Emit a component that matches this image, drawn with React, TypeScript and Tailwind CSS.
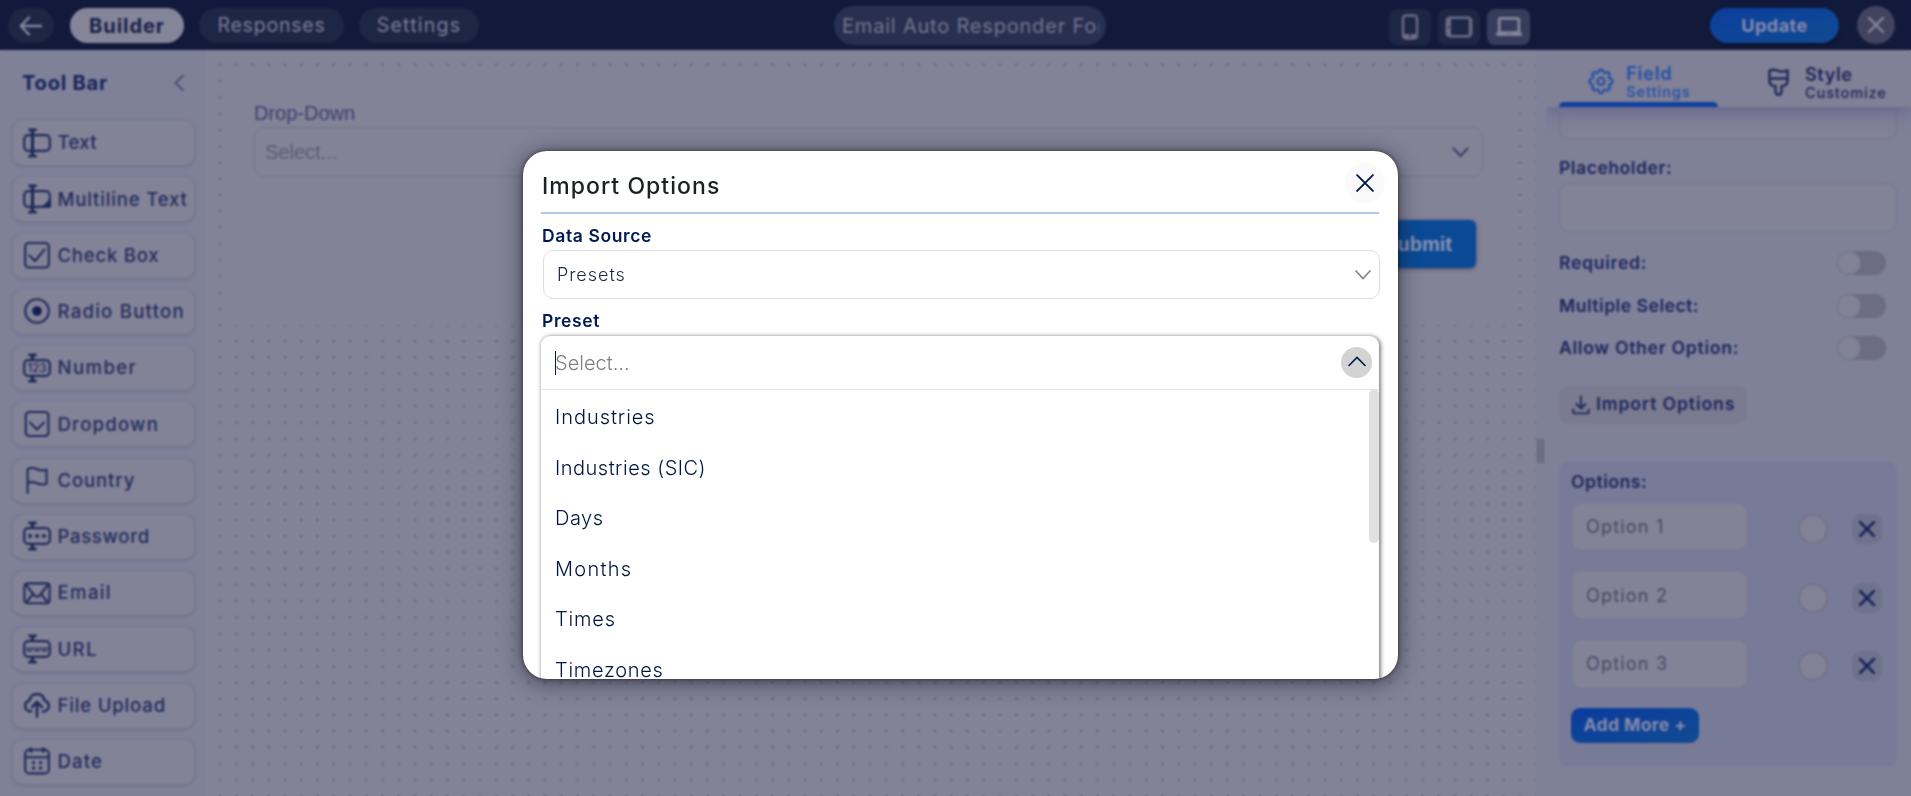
import type { ReactNode } from "react";

const NAVY = "#1f2a58";

function FieldIcon({ children, bar = "split" }: { children?: ReactNode; bar?: "split" | "full" }) {
  return (
    <svg width="28" height="30" viewBox="0 0 28 30" fill="none" stroke={NAVY} strokeWidth="2.2">
      <rect x="1.2" y="7.2" width="25.6" height="15.6" rx="4" />
      {bar === "full" ? (
        <path d="M9.5 2V28" strokeWidth="3.2" />
      ) : (
        <path d="M9.5 2V7M9.5 23V28" strokeWidth="3.2" />
      )}
      <path d="M6.4 1.8h6.2M6.4 28.200h6.2" strokeWidth="2.8" strokeLinecap="round" />
      {children}
    </svg>
  );
}

function BoxIcon({ children }: { children: ReactNode }) {
  return (
    <svg width="28" height="30" viewBox="0 0 28 30" fill="none" stroke={NAVY} strokeWidth="2.1" strokeLinecap="round" strokeLinejoin="round">
      {children}
    </svg>
  );
}

const tools: { label: string; track: string; icon: ReactNode }[] = [
  { label: "Text", track: "tracking-[0.3px]", icon: <FieldIcon bar="full" /> },
  {
    label: "Multiline Text",
    track: "tracking-[0.85px]",
    icon: (
      <FieldIcon bar="full">
        <path d="M28 14v9.800h-10z" fill={NAVY} stroke="none" />
      </FieldIcon>
    ),
  },
  {
    label: "Check Box",
    track: "tracking-[0.8px]",
    icon: (
      <BoxIcon>
        <rect x="2.200" y="3" width="23.600" height="24.500" rx="3.500" />
        <path d="M6.500 15.500l5.500 5.500 9.500-11.500" />
      </BoxIcon>
    ),
  },
  {
    label: "Radio Button",
    track: "tracking-[1.28px]",
    icon: (
      <BoxIcon>
        <circle cx="14" cy="15" r="11.800" />
        <circle cx="14" cy="15" r="4.800" fill="#131d52" stroke="none" />
      </BoxIcon>
    ),
  },
  {
    label: "Number",
    track: "tracking-[1.45px]",
    icon: (
      <FieldIcon>
        <text x="14" y="19.300" textAnchor="middle" fontSize="11.500" fontWeight="500" fill={NAVY} stroke="none" className="font-['Inter',sans-serif]">
          123
        </text>
      </FieldIcon>
    ),
  },
  {
    label: "Dropdown",
    track: "tracking-[1.25px]",
    icon: (
      <BoxIcon>
        <rect x="2.800" y="3" width="22.600" height="24" rx="3.500" />
        <path d="M7 13.500l7 7 7-7" />
      </BoxIcon>
    ),
  },
  {
    label: "Country",
    track: "tracking-[0.9px]",
    icon: (
      <BoxIcon>
        <path d="M4.600 28V4.200c3-2 6-1.500 9.400 0s6.500 1.800 9.600.3v14c-3.100 1.500-6.200 1.200-9.600-.2s-6.400-1.800-9.400-.2" />
      </BoxIcon>
    ),
  },
  {
    label: "Password",
    track: "tracking-[0.7px]",
    icon: (
      <FieldIcon>
        <path d="M5.300 15h3.600M12.200 15h3.600M19.100 15h3.600" strokeWidth="3.600" />
      </FieldIcon>
    ),
  },
  {
    label: "Email",
    track: "tracking-[1.4px]",
    icon: (
      <BoxIcon>
        <rect x="1.400" y="5.400" width="25.200" height="19.800" rx="3" />
        <path d="M3 7l8.500 10.500c1.500 1.700 3.500 1.700 5 0L25 7M3.500 24l6.500-8M24.500 24L18 16" />
      </BoxIcon>
    ),
  },
  {
    label: "URL",
    track: "tracking-[1.4px]",
    icon: (
      <FieldIcon>
        <text x="14" y="17.800" textAnchor="middle" fontSize="9" fontWeight="600" fill={NAVY} stroke="none" className="font-['Inter',sans-serif]">
          www
        </text>
      </FieldIcon>
    ),
  },
  {
    label: "File Upload",
    track: "tracking-[0.85px]",
    icon: (
      <BoxIcon>
        <g strokeWidth="2.500">
          <path d="M8.200 21.500C4.500 21.500 2.200 19 2.200 16c0-2.800 1.700-4.800 4.300-5.500C7.300 6.500 10.300 4 14 4s6.700 2.500 7.500 6.500c2.600.7 4.300 2.700 4.300 5.500 0 3-2.300 5.500-6 5.500" />
          <path d="M14 26.500V12.500M9 17l5-5 5 5" />
        </g>
      </BoxIcon>
    ),
  },
  {
    label: "Date",
    track: "tracking-[1.15px]",
    icon: (
      <BoxIcon>
        <rect x="2.200" y="3.800" width="23.600" height="23.600" rx="4" />
        <path d="M2.200 11.200h23.600" />
        <path d="M7.800 2.600v3M20.200 2.600v3" strokeWidth="2.600" />
        <path d="M10.500 16.600h.1M17.500 16.600h.1M10.500 22h.1M17.500 22h.1" strokeWidth="3.400" />
      </BoxIcon>
    ),
  },
];

const toggles = [
  { label: "Required:", track: "tracking-[0.76px]" },
  { label: "Multiple Select:", track: "tracking-[0.54px]" },
  { label: "Allow Other Option:", track: "tracking-[0.76px]" },
];

const presets = [
  { label: "Industries", track: "tracking-[0.95px]" },
  { label: "Industries (SIC)", track: "tracking-[0.5px]" },
  { label: "Days", track: "tracking-[0.5px]" },
  { label: "Months", track: "tracking-[1.3px]" },
  { label: "Times", track: "tracking-[0.8px]" },
  { label: "Timezones", track: "tracking-[0.7px]" },
];

function Cross({ size, color, width }: { size: number; color: string; width: number }) {
  return (
    <svg width={size} height={size} viewBox="0 0 16 16" fill="none" stroke={color} strokeWidth={width} strokeLinecap="round">
      <path d="M1 1l14 14M15 1L1 15" />
    </svg>
  );
}

function Header() {
  return (
    <header className="flex h-[50px] shrink-0 items-start bg-[#121a3c] text-[19.5px] font-[430] text-[#7b7c97]">
      <div className="flex w-[834px] shrink-0 pl-2 pt-2">
        <button className="flex h-[35px] w-[46px] items-center justify-center rounded-full bg-[#1e2646]">
          <svg width="24" height="20" viewBox="0 0 24 20" fill="none" stroke="#85869c" strokeWidth="2.400" strokeLinecap="round" strokeLinejoin="round">
            <path d="M22 10H2M10 1.500L1.800 10l8.200 8.500" />
          </svg>
        </button>
        <button className="ml-4 flex h-[35px] w-[114px] items-center justify-center rounded-full bg-[#85859a] text-[20px] font-bold tracking-[0.95px] text-[#191f4a]">
          Builder
        </button>
        <button className="ml-[15px] flex h-[35px] w-[145px] items-center justify-center rounded-full bg-[#1e2646] tracking-[0.8px]">
          Responses
        </button>
        <button className="ml-[15px] flex h-[35px] w-[120px] items-center justify-center rounded-full bg-[#1e2646] tracking-[1.25px]">
          Settings
        </button>
      </div>
      <div className="mt-[6px] flex h-[39px] w-[272px] items-center rounded-full bg-[#292f50] pl-2 pr-[7px] text-[#73748d]">
        <span className="overflow-hidden whitespace-nowrap text-[20px] tracking-[0.8px]">Email Auto Responder Form</span>
      </div>
      <div className="flex flex-1 justify-end pr-4">
        <div className="mt-[9px] flex gap-[7px]">
          <div className="flex h-9 w-[42px] items-center justify-center rounded-lg bg-[#1e2646]">
            <svg width="18" height="26" viewBox="0 0 18 26" fill="none">
              <rect x="2" y="1.500" width="14" height="23" rx="3" stroke="#6b6c85" strokeWidth="2.400" />
              <path d="M2 20h14v2.500a2 2 0 0 1-2 2H4a2 2 0 0 1-2-2z" fill="#6b6c85" />
              <circle cx="9" cy="22" r="1" fill="#1e2646" />
            </svg>
          </div>
          <div className="flex h-9 w-[42px] items-center justify-center rounded-lg bg-[#1e2646]">
            <svg width="28" height="22" viewBox="0 0 28 22" fill="none">
              <rect x="1.800" y="1.800" width="24.400" height="18.400" rx="3" stroke="#6b6c85" strokeWidth="2.400" />
              <path d="M2 4a2 2 0 0 1 2-2h2v18H4a2 2 0 0 1-2-2z" fill="#6b6c85" />
              <path d="M24.500 2v18" stroke="#6b6c85" strokeWidth="1.500" />
              <circle cx="4" cy="11" r="1" fill="#1e2646" />
            </svg>
          </div>
          <div className="flex h-9 w-[43px] items-center justify-center rounded-lg bg-[#363c5c]">
            <svg width="28" height="20" viewBox="0 0 28 20" fill="none">
              <rect x="4.200" y="1.400" width="19.600" height="14.200" rx="1.500" stroke="#85869c" strokeWidth="2.800" />
              <path d="M1 15.500h26v1.500a2 2 0 0 1-2 2H3a2 2 0 0 1-2-2z" fill="#85869c" />
              <path d="M11 17.200h6" stroke="#5c6079" strokeWidth="1" />
            </svg>
          </div>
        </div>
        <button className="ml-[180px] mt-2 flex h-[35px] w-[129px] items-center justify-center rounded-full bg-linear-to-br from-[#0c3e9e] to-[#124a92] text-[18px] font-bold tracking-[0.5px] text-[#8689ab] shadow-[0_2px_4px_rgba(0,0,0,0.35)]">
          Update
        </button>
        <button className="ml-[18px] mt-[6px] flex size-[38px] items-center justify-center rounded-full bg-[#42435f]">
          <Cross size={16} color="#8b8ca2" width={2} />
        </button>
      </div>
    </header>
  );
}

function ToolBar() {
  return (
    <aside className="flex w-[206px] shrink-0 flex-col overflow-hidden bg-[#7f8199]">
      <div className="flex h-[66px] items-center justify-between pl-[22px] pr-[22px]">
        <h2 className="text-[20px] font-bold tracking-[0.8px] text-[#17225a]">Tool Bar</h2>
        <svg width="10" height="16" viewBox="0 0 10 16" fill="none" stroke="#4a4f72" strokeWidth="2" strokeLinecap="round">
          <path d="M8.800 1L1.500 8l7.300 7" />
        </svg>
      </div>
      <ul className="flex flex-col gap-[12.25px] pl-[13px] pr-3 pt-[5px]">
        {tools.map((t) => (
          <li key={t.label} className="flex h-11 shrink-0 items-center rounded-[10px] bg-[#838398] pb-px pl-[10px] shadow-[0_1px_4px_rgba(50,45,70,0.25)]">
            {t.icon}
            <span className={`ml-[6.500px] whitespace-nowrap text-[18.500px] font-[450] leading-none text-[#222c5c] ${t.track}`}>{t.label}</span>
          </li>
        ))}
      </ul>
    </aside>
  );
}

function Canvas() {
  return (
    <main className="flex-1 bg-[#838398] bg-[radial-gradient(circle,#62627f_0.9px,transparent_1.6px)] bg-[length:16.25px_16.25px] bg-[position:5.875px_6.875px] pl-4 pr-[18px] pt-[17px]">
      <div className="h-[258px] bg-[#838398] pl-8 pr-[35px] pt-[35px] font-['Liberation_Sans',Arial,sans-serif] text-[20px]">
        <label className="block h-[25px] leading-[22px] text-[#3e426c]">Drop-Down</label>
        <div className="flex h-[50px] items-center justify-between rounded-[10px] border border-[#747489] pl-[10px] pr-[13px]">
          <span className="text-[#5b5c73]">Select...</span>
          <svg width="17" height="11" viewBox="0 0 17 11" fill="none" stroke="#3b4068" strokeWidth="2.200" strokeLinecap="round">
            <path d="M1.500 1.500l7 7.500 7-7.500" />
          </svg>
        </div>
        <div className="mt-[43px] flex justify-end pr-[7px]">
          <button className="flex h-12 items-center rounded-[6px] bg-[#0a4a94] px-6 font-bold text-[#8c93b4] shadow-[0_1px_4px_rgba(30,20,60,0.5)]">Submit</button>
        </div>
      </div>
    </main>
  );
}

function SettingsPanel() {
  return (
    <aside className="flex w-[375px] shrink-0 bg-[#7f8199] text-[17.500px]">
      <div className="flex w-[10px] items-center pl-px">
        <div className="mt-[56px] flex h-6 w-[7px] justify-between">
          <span className="w-[3px] bg-[#67677f]" />
          <span className="w-[3px] bg-[#67677f]" />
        </div>
      </div>
      <div className="flex flex-1 flex-col">
        <div className="relative flex h-[57px] shrink-0 bg-[#808096] shadow-[0_4px_20px_rgba(80,76,130,0.6)] [clip-path:inset(0_0_-30px_0)]">
          <div className="ml-[13px] flex w-[159px] flex-col">
            <div className="flex flex-1 items-center pl-[29px] pt-1 text-[#2250a8]">
              <svg width="26" height="27" viewBox="0 0 26 27" fill="none" stroke="currentColor" strokeWidth="2.200" strokeLinejoin="round" className="mt-[7px]">
                <path d="M10.600 4.200Q11 1.600 13 1.600t2.400 2.600l2 .9q2-1.700 3.500-.3t-.1 3.500l.8 2Q24.500 11 24.500 13.400t-2.900 2.900l-.8 2q1.700 2 .1 3.500t-3.500-.3l-2 .8Q15 25.400 13 25.400t-2.400-3.100l-2-.8q-2 1.700-3.500.3t.1-3.500l-.8-2Q1.500 15.800 1.500 13.400t2.900-3.100l.8-2q-1.700-2-.1-3.500t3.500.3z" />
                <circle cx="13" cy="13.400" r="3.500" />
              </svg>
              <div className="ml-3 flex flex-col pt-[9px]">
                <span className="text-[18px] font-semibold leading-[18px] tracking-[0.9px]">Field</span>
                <span className="text-[14.500px] font-[450] leading-[17px] tracking-[1px]">Settings</span>
              </div>
            </div>
            <div className="h-[5px] rounded-t-[5px] bg-[#103f9f]" />
          </div>
          <div className="flex items-center pb-px pl-[50px] text-[#20285a]">
            <svg width="21" height="28" viewBox="0 0 21 28" fill="none" stroke="currentColor" strokeWidth="2.400" strokeLinejoin="round" className="mt-[7px]">
              <path d="M1.500 2.500c3-1.500 5.500-.8 8.500.4s6 1 9.500-.6V13c0 3.500-2.500 5-6 5.200v5.500a3 3 0 0 1-6 0v-5.500C4 18 1.500 16.500 1.500 13zM1.500 10.500h18" />
            </svg>
            <div className="ml-4 flex flex-col pt-[10px]">
              <span className="text-[18px] font-semibold leading-[18px] tracking-[0.6px]">Style</span>
              <span className="text-[14.500px] font-[450] leading-[17px] tracking-[0.9px]">Customize</span>
            </div>
          </div>
        </div>
        <div className="flex flex-col pl-[13px] pr-[14px] font-semibold text-[#1d275c]">
          <div className="h-8 rounded-b-[10px] border border-t-0 border-[#77778c] bg-[#838398]/60" />
          <label className="mt-[17px] leading-[24px] tracking-[0.57px]">Placeholder:</label>
          <div className="mt-[3px] h-[49px] rounded-[10px] border border-[#77778c] bg-[#838398]" />
          <div className="mt-[10px] flex flex-col pr-[11px]">
            {toggles.map((t) => (
              <div key={t.label} className="flex h-[42.500px] items-center justify-between">
                <span className={t.track}>{t.label}</span>
                <span className="flex h-6 w-[49px] rounded-full bg-[#6c6c82]">
                  <span className="h-6 w-6 rounded-full border border-[#74748a] bg-[#828297]" />
                </span>
              </div>
            ))}
          </div>
          <button className="mt-[16px] flex h-[38px] w-[188px] items-center rounded-[10px] bg-[#7a7a90] pl-[13px]">
            <svg width="18" height="20" viewBox="0 0 18 20" fill="none" stroke={NAVY} strokeWidth="1.900" strokeLinecap="round" strokeLinejoin="round">
              <path d="M9 1.500v11.500M4.500 9L9 13.500 13.500 9M1.200 14.500v1.700c0 1.300.9 2.200 2.200 2.200h11.200c1.300 0 2.200-.9 2.200-2.200v-1.700" />
            </svg>
            <span className="ml-[6px] tracking-[0.94px]">Import Options</span>
          </button>
          <div className="mt-[37px] flex h-[306px] flex-col rounded-[10px] bg-[#787b97] pl-[13px] pr-[13px] pt-[10px]">
            <span className="-ml-px leading-[22px] tracking-[0.54px]">Options:</span>
            <div className="mt-[10px] flex flex-col gap-[21.250px]">
              {["Option 1", "Option 2", "Option 3"].map((o) => (
                <div key={o} className="flex items-center">
                  <div className="flex h-[47.500px] w-[175px] items-center rounded-[9px] border border-[#7b7a90] bg-[#838398] pl-[13px] text-[18px] font-[430] tracking-[1.200px] text-[#494a62]">
                    {o}
                  </div>
                  <span className="ml-[51px] mt-[5px] size-[30px] rounded-full border-2 border-[#747389] bg-[#828297]" />
                  <span className="ml-6 mt-[5px] flex size-[30px] items-center justify-center rounded-[9px] bg-[#6f728d]">
                    <Cross size={16} color="#17225a" width={2.5} />
                  </span>
                </div>
              ))}
            </div>
            <button className="-ml-px mt-[20px] flex h-[35px] w-[128px] shrink-0 items-center justify-center rounded-[9px] bg-linear-to-br from-[#0b3c9e] to-[#124a92] font-bold tracking-[0.4px] text-[#8689ab]">
              Add More +
            </button>
          </div>
        </div>
      </div>
    </aside>
  );
}

function ImportDialog() {
  return (
    <div className="fixed inset-0 flex items-start justify-center pl-[10px] pt-[151px] backdrop-blur-[0.9px]">
      <section
        role="dialog"
        className="flex h-[528px] w-[875px] flex-col rounded-[24px] bg-white pl-[18px] pr-[19px] shadow-[0_0_4px_rgba(0,0,0,0.55),0_3px_22px_rgba(20,20,30,0.6)] [overflow:clip]"
      >
        <div className="flex h-[63px] shrink-0 items-start justify-between border-b-2 border-[#aec9e5]">
          <h1 className="pl-px pt-[21px] text-[23px] font-[550] leading-[28px] tracking-[1.050px] text-[#1c2127]">Import Options</h1>
          <button className="-mr-[6px] mt-3 flex size-10 items-center justify-center rounded-full bg-[#fafafa]">
            <Cross size={18} color="#001a4d" width={1.7} />
          </button>
        </div>
        <label className="mt-[10px] pl-px text-[17.500px] font-semibold leading-[24px] tracking-[0.61px] text-[#001a52]">Data Source</label>
        <div className="-mr-px ml-[2px] mt-[2px] flex h-[49px] shrink-0 items-center justify-between rounded-[10px] border border-[#dedede] pl-[13px] pr-[8px]">
          <span className="text-[18px] font-light tracking-[0.950px] text-[#1c2848]">Presets</span>
          <svg width="16" height="10" viewBox="0 0 16 10" fill="none" stroke="#858585" strokeWidth="1.700" strokeLinecap="round">
            <path d="M1 1l7 7.500L15 1" />
          </svg>
        </div>
        <label className="mt-[10px] pl-px text-[17.500px] font-semibold leading-[24px] tracking-[0.61px] text-[#001a52]">Preset</label>
        <div className="mt-[3px] flex h-[460px] shrink-0 flex-col rounded-[9px] shadow-[0_0_4px_rgba(0,0,0,0.3),2px_1px_4px_rgba(0,0,0,0.4)]">
          <div className="flex h-[53px] shrink-0 items-center justify-between rounded-t-[9px] pl-[14px] pr-[7px]">
            <div className="flex items-center">
              <span className="h-6 w-px bg-[#001a4d]" />
              <span className="-ml-px text-[20px] font-light text-[#808080]">Select...</span>
            </div>
            <span className="flex size-[31px] items-center justify-center rounded-full bg-[#d3d3d3]">
              <svg width="18" height="11" viewBox="0 0 18 11" fill="none" stroke="#001a4d" strokeWidth="1.600" strokeLinecap="round" className="-mt-[3px]">
                <path d="M1 9.500L9 1.500l8 8" />
              </svg>
            </span>
          </div>
          <div className="flex flex-1 justify-between border-t border-[#e6e6e6]">
            <ul className="pt-[2px] pl-[14px]">
              {presets.map((p) => (
                <li key={p.label} className={`h-[50.600px] text-[20px] font-light leading-[51px] text-[#001640] ${p.track}`}>
                  {p.label}
                </li>
              ))}
            </ul>
            <div className="-mt-px h-[154px] w-[10px] rounded-full bg-[#e1e1e1]" />
          </div>
        </div>
      </section>
    </div>
  );
}

export default function App() {
  return (
    <div className="flex h-screen w-full flex-col overflow-hidden font-['Inter',sans-serif]">
      <Header />
      <div className="flex min-h-0 flex-1 overflow-hidden">
        <ToolBar />
        <Canvas />
        <SettingsPanel />
      </div>
      <ImportDialog />
    </div>
  );
}
